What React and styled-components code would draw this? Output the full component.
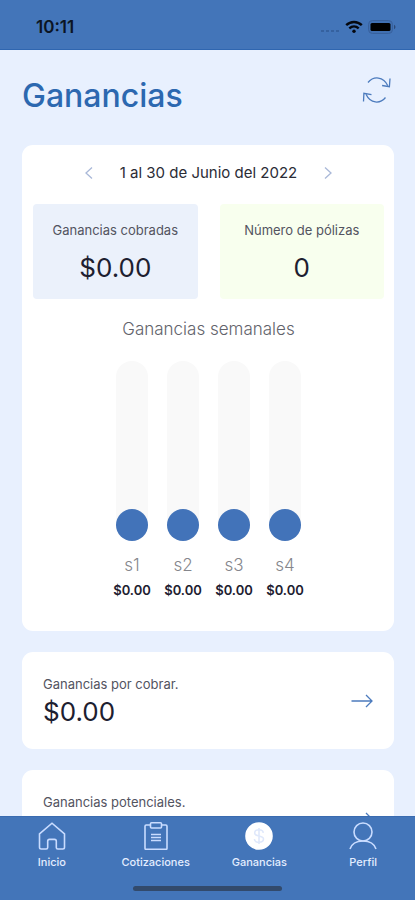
import React, { useState } from "react";
import styled, { createGlobalStyle } from "styled-components";

const weeks = [
  { id: "s1", amount: 0 },
  { id: "s2", amount: 0 },
  { id: "s3", amount: 0 },
  { id: "s4", amount: 0 },
];

const summaries = [
  { id: "cobrar", label: "Ganancias por cobrar.", amount: 0 },
  { id: "potenciales", label: "Ganancias potenciales.", amount: 0 },
];

const tabs = [
  { id: "inicio", label: "Inicio", Icon: HomeIcon },
  { id: "cotizaciones", label: "Cotizaciones", Icon: ClipboardIcon },
  { id: "ganancias", label: "Ganancias", Icon: CoinIcon },
  { id: "perfil", label: "Perfil", Icon: UserIcon },
];

const money = (value) => `$${value.toFixed(2)}`;

function HomeIcon() {
  return (
    <svg width="28" height="28" viewBox="0 0 28 28">
      <path d="M1.500 11.800 14 1.200l12.500 10.600v13.500q0 1.700-1.700 1.700h-5q-1.500 0-1.500-1.500v-6.300q0-1.800-1.800-1.800h-5q-1.800 0-1.800 1.800v6.300q0 1.500-1.500 1.500h-5q-1.700 0-1.700-1.700z" />
    </svg>
  );
}

function ClipboardIcon() {
  return (
    <svg width="28" height="28" viewBox="0 0 28 28">
      <path d="M8.500 3H4.200q-1.200 0-1.200 1.200v22q0 1.200 1.200 1.200h19.600q1.200 0 1.200-1.200v-22q0-1.200-1.200-1.200h-4.300" />
      <rect x="8.500" y="0.800" width="11" height="5.200" rx="1" />
      <path d="M9 12.500h10M9 15.500h10M9 18.500h10" />
    </svg>
  );
}

function CoinIcon() {
  return (
    <svg width="28" height="28" viewBox="0 0 28 28">
      <circle cx="14" cy="14" r="13" fill="#fff" stroke="#fff" />
      <path
        d="M14 6v16M18.300 10.800c-.3-1.900-1.800-3-4.300-3s-4.300 1.200-4.300 3.100c0 4.300 8.800 1.900 8.800 6.200 0 1.900-1.800 3.200-4.500 3.200s-4.400-1.300-4.600-3.300"
        stroke="#dfe8fb"
      />
    </svg>
  );
}

function UserIcon() {
  return (
    <svg width="28" height="28" viewBox="0 0 28 28">
      <circle cx="14" cy="10" r="9" />
      <path d="M1 27c1.600-4.900 6.600-8 13-8s11.400 3.100 13 8" />
    </svg>
  );
}

function App() {
  const [active, setActive] = useState("ganancias");

  return (
    <Screen>
      <GlobalStyle />
      <StatusBar>
        <time>10:11</time>
        <StatusIcons>
          <svg width="20" height="12" viewBox="0 0 20 12" fill="#35619f">
            <rect x="1" y="9" width="3" height="2" />
            <rect x="6" y="9" width="3" height="2" />
            <rect x="11" y="9" width="3" height="2" />
            <rect x="16" y="9" width="3" height="2" />
          </svg>
          <svg width="18" height="14" viewBox="0 0 18 14" fill="none" stroke="#05080f" strokeWidth="2.400">
            <path d="M1.200 5.200c4.500-4.300 11.100-4.300 15.600 0" />
            <path d="M4.300 8.400c2.800-2.500 6.600-2.500 9.400 0" />
            <circle cx="9" cy="11.300" r="1.700" fill="#05080f" stroke="none" />
          </svg>
          <svg width="28" height="14" viewBox="0 0 28 14">
            <rect x="0.500" y="0.500" width="24" height="13" rx="4" fill="#4070b2" stroke="#38619d" />
            <rect x="2.500" y="3" width="20" height="8" rx="1.500" fill="#000" />
            <path d="M26 4.800c2 .8 2 3.600 0 4.400z" fill="#2c4a78" />
          </svg>
        </StatusIcons>
      </StatusBar>

      <Content>
        <Header>
          <h1>Ganancias</h1>
          <IconButton aria-label="Actualizar">
            <svg width="30" height="28" viewBox="0 0 30 28">
              <path d="M6 6.500C11.500-.2 21.500.2 25.800 9.700" />
              <path d="M28 2.500l-.6 8.200-7.300-1.200" />
              <path d="M23.500 21.500C18 28.200 8.500 27.800 4 18.300" />
              <path d="M1.500 25.500l.4-8.200 7.600 1.400" />
            </svg>
          </IconButton>
        </Header>

        <Card>
          <Month>
            <IconButton $light aria-label="Mes anterior">
              <svg width="10" height="14" viewBox="0 0 10 14">
                <path d="M8 1.500L2 7l6 5.500" />
              </svg>
            </IconButton>
            <span>1 al 30 de Junio del 2022</span>
            <IconButton $light aria-label="Mes siguiente">
              <svg width="10" height="14" viewBox="0 0 10 14">
                <path d="M2 1.500L8 7l-6 5.500" />
              </svg>
            </IconButton>
          </Month>

          <Tiles>
            <Tile $color="#ebf1fb">
              <Label>Ganancias cobradas</Label>
              <Amount>{money(0)}</Amount>
            </Tile>
            <Tile $color="#f8ffee">
              <Label>Número de pólizas</Label>
              <Amount>0</Amount>
            </Tile>
          </Tiles>

          <ChartTitle>Ganancias semanales</ChartTitle>
          <Chart>
            {weeks.map((week) => (
              <Week key={week.id}>
                <Track>
                  <Knob />
                </Track>
                <WeekName>{week.id}</WeekName>
                <WeekAmount>{money(week.amount)}</WeekAmount>
              </Week>
            ))}
          </Chart>
        </Card>

        {summaries.map((item) => (
          <Summary key={item.id}>
            <div>
              <Label>{item.label}</Label>
              <Amount>{money(item.amount)}</Amount>
            </div>
            <IconButton aria-label={item.label}>
              <svg width="22" height="14" viewBox="0 0 22 14">
                <path d="M0.500 7h20.500M15 1l6 6-6 6" />
              </svg>
            </IconButton>
          </Summary>
        ))}
      </Content>

      <Footer>
        <Nav>
          {tabs.map(({ id, label, Icon }) => (
            <Tab
              key={id}
              aria-current={active === id ? "page" : undefined}
              onClick={() => setActive(id)}
            >
              <Icon />
              {label}
            </Tab>
          ))}
        </Nav>
        <HomeIndicator />
      </Footer>
    </Screen>
  );
}

const GlobalStyle = createGlobalStyle`
  * {
    box-sizing: border-box;
  }

  body {
    margin: 0;
    font-family: Inter, "Liberation Sans", sans-serif;
    color: #1d2030;
    background-color: #e8f0fe;
  }

  button {
    font: inherit;
    border: 0;
    padding: 0;
    background: none;
    cursor: pointer;
  }

  svg {
    display: block;
  }
`;

const Screen = styled.div`
  display: flex;
  flex-direction: column;
  height: 100vh;
`;

const StatusBar = styled.div`
  display: flex;
  align-items: center;
  justify-content: space-between;
  flex-shrink: 0;
  height: 50px;
  padding: 4px 19px 0 36px;
  font-size: 17px;
  font-weight: 600;
  color: #0b1424;
  background-color: #4375b9;
  border-bottom: 1px solid #2f66b0;
`;

const StatusIcons = styled.div`
  display: flex;
  align-items: center;
  gap: 5px;
`;

const Content = styled.main`
  flex: 1;
  min-height: 0;
  overflow-y: auto;
  scrollbar-width: none;
  padding: 0 21px 0 22px;
`;

const Header = styled.header`
  display: flex;
  align-items: center;
  justify-content: space-between;
  height: 95px;
  padding: 0 2px 4px 0;

  h1 {
    margin: 0;
    font-size: 32px;
    font-weight: 500;
    line-height: 36px;
    color: #2c68b0;
  }

  button {
    margin-bottom: 12px;
  }
`;

const IconButton = styled.button`
  svg {
    fill: none;
    stroke: ${({ $light }) => ($light ? "#a9b8d8" : "#4c7bbd")};
    stroke-width: 1.3;
  }
`;

const Card = styled.section`
  padding: 0 10px 32px 11px;
  background-color: #fff;
  border-radius: 11px;
`;

const Month = styled.div`
  display: flex;
  align-items: center;
  justify-content: center;
  gap: 26px;
  height: 59px;
  padding-bottom: 4px;
  font-size: 15px;
  color: #2b2c36;
`;

const Tiles = styled.div`
  display: grid;
  grid-template-columns: 1fr 1fr;
  gap: 22px;
`;

const Tile = styled.div`
  display: flex;
  flex-direction: column;
  align-items: center;
  gap: 12px;
  height: 95px;
  padding-top: 16px;
  border-radius: 4px;
  background-color: ${({ $color }) => $color};
`;

const Label = styled.div`
  font-size: 13px;
  line-height: 20px;
  color: #53545f;
`;

const Amount = styled.div`
  font-size: 26px;
  line-height: 32px;
`;

const ChartTitle = styled.h2`
  margin: 18px 0 20px;
  font-size: 17px;
  font-weight: 300;
  line-height: 24px;
  text-align: center;
  color: #62636b;
`;

const Chart = styled.div`
  display: flex;
  justify-content: center;
  gap: 13px;
`;

const Week = styled.div`
  display: flex;
  flex-direction: column;
  align-items: center;
  width: 38px;
`;

const Track = styled.div`
  display: flex;
  align-items: flex-end;
  width: 32px;
  height: 180px;
  border-radius: 16px;
  background-color: #f9f9f9;
`;

const Knob = styled.div`
  width: 100%;
  aspect-ratio: 1;
  border-radius: 50%;
  background-color: #4273b9;
`;

const WeekName = styled.div`
  margin-top: 12px;
  font-size: 17px;
  font-weight: 300;
  line-height: 24px;
  color: #85868c;
`;

const WeekAmount = styled.div`
  margin-top: 4px;
  font-size: 13px;
  font-weight: 600;
  line-height: 18px;
`;

const Summary = styled.section`
  display: flex;
  align-items: center;
  justify-content: space-between;
  height: 97px;
  margin-top: 21px;
  padding: 0 21px;
  background-color: #fff;
  border-radius: 11px;

  ${Amount} {
    margin-top: 2px;
  }
`;

const Footer = styled.footer`
  flex-shrink: 0;
  height: 84px;
  padding-top: 5px;
  background-color: #4375b9;
  border-top: 1px solid #3a6bb0;
`;

const Nav = styled.nav`
  display: grid;
  grid-template-columns: repeat(4, 1fr);
`;

const Tab = styled.button`
  && {
    display: flex;
    flex-direction: column;
    align-items: center;
    gap: 4px;
    font-size: 11px;
    font-weight: 500;
    line-height: 16px;
    color: #e3edff;
  }

  svg {
    fill: none;
    stroke: #c9dcff;
    stroke-width: 1.6;
  }
`;

const HomeIndicator = styled.div`
  width: 36%;
  height: 5px;
  margin: 16px auto 0;
  border-radius: 3px;
  background-color: #324a6c;
`;

export default App;
